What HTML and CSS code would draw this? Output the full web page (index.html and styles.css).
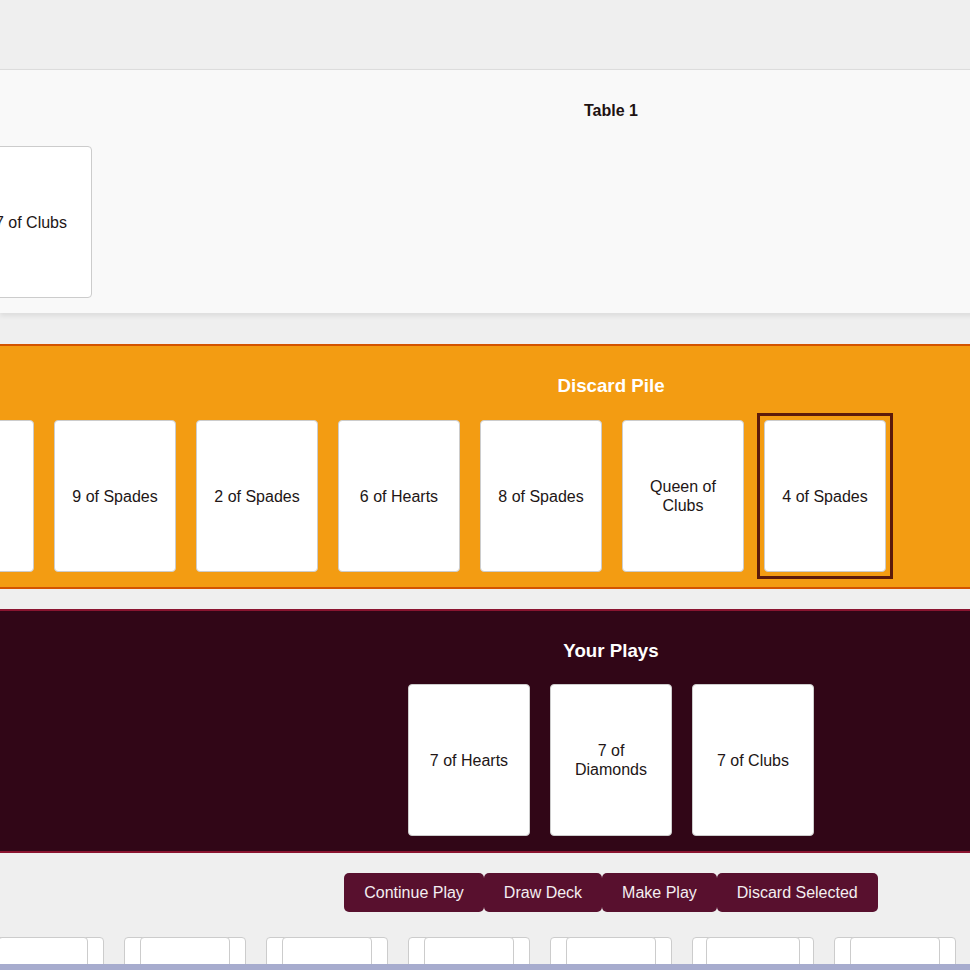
FILE: index.html
```html
<!DOCTYPE html>
<html lang="en">
<head>
<meta charset="utf-8">
<title>Card Table</title>
<link rel="stylesheet" href="styles.css">
</head>
<body>
<main class="page">
  <section class="zone zone-table">
    <h4 class="zone-title">Table 1</h4>
    <div class="row row-table">
      <div class="card">7 of Clubs</div>
    </div>
  </section>

  <section class="zone zone-discard">
    <h3 class="zone-title">Discard Pile</h3>
    <div class="row row-discard">
      <div class="card">King of Hearts</div>
      <div class="card">9 of Spades</div>
      <div class="card">2 of Spades</div>
      <div class="card">6 of Hearts</div>
      <div class="card">8 of Spades</div>
      <div class="card">Queen of Clubs</div>
      <div class="card selected">4 of Spades</div>
    </div>
  </section>

  <section class="zone zone-plays">
    <h3 class="zone-title">Your Plays</h3>
    <div class="row row-plays">
      <div class="card">7 of Hearts</div>
      <div class="card">7 of Diamonds</div>
      <div class="card">7 of Clubs</div>
    </div>
  </section>

  <div class="actions">
    <button class="btn">Continue Play</button>
    <button class="btn">Draw Deck</button>
    <button class="btn">Make Play</button>
    <button class="btn">Discard Selected</button>
  </div>

  <div class="row row-hand">
    <div class="card stack"></div>
    <div class="card stack"></div>
    <div class="card stack"></div>
    <div class="card stack"></div>
    <div class="card stack"></div>
    <div class="card stack tight"></div>
    <div class="card stack"></div>
  </div>
</main>
<div class="footer-bar"></div>
</body>
</html>
```

FILE: styles.css
```css
html, body {
  margin: 0;
  padding: 0;
  overflow: hidden;
  height: 100%;
}

body {
  background: #efefef;
  font-family: "Liberation Sans", Arial, sans-serif;
  color: #221616;
}

.page {
  width: 1222px;
  padding-top: 69px;
}

.zone {
  box-sizing: border-box;
}

.zone-title {
  margin: 0;
  text-align: center;
  font-weight: bold;
}

.zone-table {
  background: #f9f9f9;
  border-top: 1px solid #dcdcdc;
  box-shadow: 0 3px 5px rgba(0, 0, 0, 0.08);
  padding: 15px 0 15px;
}

.zone-table .zone-title {
  font-size: 16px;
  line-height: 18px;
  margin: 17px 0 26px;
  color: #1e1212;
}

.zone-discard {
  margin-top: 31px;
  background: #f39c12;
  border-top: 2px solid #d35400;
  border-bottom: 2px solid #d35400;
  padding: 29px 0 15px;
}

.zone-plays {
  margin-top: 20px;
  background: #310617;
  border-top: 2px solid #8a1430;
  border-bottom: 2px solid #8a1430;
  padding: 29px 0 15px;
}

.zone-discard .zone-title,
.zone-plays .zone-title {
  color: #ffffff;
  font-size: 18.72px;
  line-height: 22px;
  margin-bottom: 23px;
}

.zone-plays .zone-title {
  margin-bottom: 22px;
}

.row {
  display: flex;
  gap: 20px;
}

.row-table {
  margin-left: -30px;
}

.row-discard {
  margin-left: -88px;
}

.row-plays {
  justify-content: center;
}

.row-hand {
  margin-top: 25px;
  margin-left: -18px;
}

.card {
  flex: none;
  box-sizing: border-box;
  width: 122px;
  height: 152px;
  padding: 0 10px;
  background: #ffffff;
  border: 1px solid #cccccc;
  border-radius: 4px;
  display: flex;
  align-items: center;
  justify-content: center;
  text-align: center;
  font-size: 16px;
  line-height: 19px;
  color: #221616;
}

.card.selected {
  position: relative;
}

.card.selected::before {
  content: "";
  position: absolute;
  top: -8px;
  bottom: -8px;
  left: -8px;
  right: -8px;
  border: 3px solid #5c1a0a;
}

.stack {
  position: relative;
}

.stack::after {
  content: "";
  position: absolute;
  top: -1px;
  bottom: -1px;
  left: 15px;
  right: 15px;
  border: 1px solid #cccccc;
  border-radius: 4px;
  background: #ffffff;
}

.stack.tight::after {
  left: 13px;
  right: 13px;
}

.actions {
  margin-top: 20px;
  display: flex;
  justify-content: center;
}

.btn {
  font-family: "Liberation Sans", Arial, sans-serif;
  font-size: 16px;
  line-height: 19px;
  padding: 10px 20px;
  border: none;
  border-radius: 5px;
  background: #58102e;
  color: #f4eef1;
  cursor: pointer;
}

.footer-bar {
  position: fixed;
  left: 0;
  right: 0;
  bottom: 0;
  height: 6px;
  background: #a7acce;
}
```
